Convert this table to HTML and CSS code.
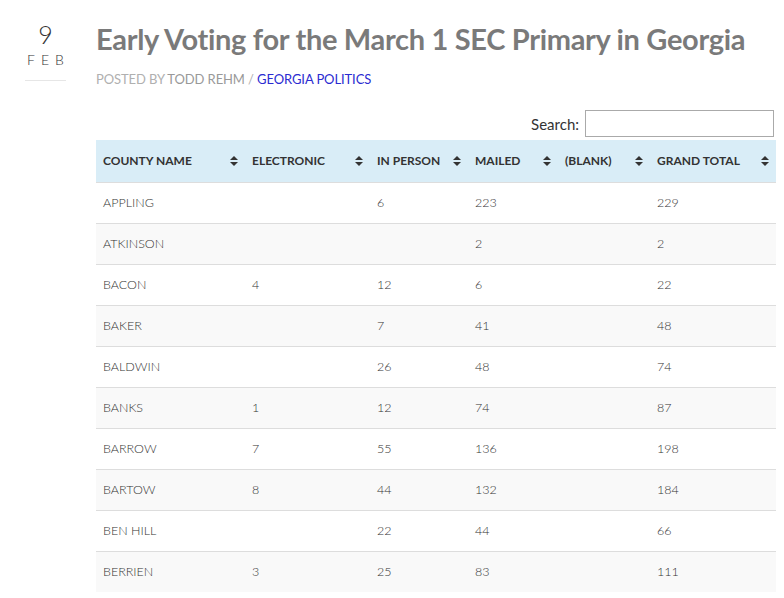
FILE: index.html
```html
<!DOCTYPE html>
<html>
<head>
<meta charset="utf-8">
<link rel="stylesheet" href="styles.css">
</head>
<body>
<div class="page">
  <div class="date">
    <div class="day">9</div>
    <div class="month">FEB</div>
  </div>
  <div class="post">
    <h1 class="title">Early Voting for the March 1 SEC Primary in Georgia</h1>
    <div class="meta"><span class="by">POSTED BY</span> <span class="author">TODD REHM</span> <span class="sep">/</span> <a class="cat" href="#">GEORGIA POLITICS</a></div>
    <div class="search"><label>Search:</label><input type="text"></div>
    <table class="data">
      <colgroup>
        <col class="c1"><col class="c2"><col class="c3"><col class="c4"><col class="c5"><col class="c6">
      </colgroup>
      <thead>
        <tr>
          <th><span>COUNTY NAME</span><i class="sort"></i></th>
          <th><span>ELECTRONIC</span><i class="sort"></i></th>
          <th><span>IN PERSON</span><i class="sort"></i></th>
          <th><span>MAILED</span><i class="sort"></i></th>
          <th><span>(BLANK)</span><i class="sort"></i></th>
          <th><span>GRAND TOTAL</span><i class="sort"></i></th>
        </tr>
      </thead>
      <tbody>
        <tr><td>APPLING</td><td></td><td>6</td><td>223</td><td></td><td>229</td></tr>
        <tr><td>ATKINSON</td><td></td><td></td><td>2</td><td></td><td>2</td></tr>
        <tr><td>BACON</td><td>4</td><td>12</td><td>6</td><td></td><td>22</td></tr>
        <tr><td>BAKER</td><td></td><td>7</td><td>41</td><td></td><td>48</td></tr>
        <tr><td>BALDWIN</td><td></td><td>26</td><td>48</td><td></td><td>74</td></tr>
        <tr><td>BANKS</td><td>1</td><td>12</td><td>74</td><td></td><td>87</td></tr>
        <tr><td>BARROW</td><td>7</td><td>55</td><td>136</td><td></td><td>198</td></tr>
        <tr><td>BARTOW</td><td>8</td><td>44</td><td>132</td><td></td><td>184</td></tr>
        <tr><td>BEN HILL</td><td></td><td>22</td><td>44</td><td></td><td>66</td></tr>
        <tr><td>BERRIEN</td><td>3</td><td>25</td><td>83</td><td></td><td>111</td></tr>
      </tbody>
    </table>
  </div>
</div>
</body>
</html>
```
FILE: styles.css
```css
html, body {
  margin: 0;
  padding: 0;
  background: #fff;
  font-family: Lato, "Open Sans", sans-serif;
}
.page {
  display: flex;
  align-items: flex-start;
}
.date {
  width: 41px;
  margin-left: 25px;
  margin-top: 20px;
  margin-right: 30px;
  text-align: center;
  color: #333;
  font-weight: 300;
  padding-bottom: 12px;
  border-bottom: 1px solid #e6e6e6;
}
.day {
  font-size: 25px;
  line-height: 28px;
  color: #333;
}
.month {
  margin-top: 4px;
  font-size: 14px;
  line-height: 16px;
  letter-spacing: 6px;
  margin-right: -6px;
  color: #333;
}
.post {
  width: 680px;
}
.title {
  margin: 0;
  padding-top: 22px;
  font-size: 29px;
  line-height: 34px;
  font-weight: 700;
  color: #7a7a7a;
  letter-spacing: -0.32px;
  white-space: nowrap;
}
.meta {
  margin-top: 16px;
  font-size: 13px;
  line-height: 14px;
  letter-spacing: -0.1px;
  color: #b0b0b0;
}
.meta .author {
  color: #999;
}
.meta .cat {
  color: #2b2bd1;
  text-decoration: none;
}
.search {
  display: flex;
  justify-content: flex-end;
  align-items: center;
  gap: 6px;
  margin-top: 24px;
  margin-right: 2px;
  font-size: 15px;
  color: #333;
}
.search input {
  width: 185px;
  height: 23px;
  box-sizing: content-box;
  border: 1px solid #aaa;
  padding: 1px;
  margin: 0;
}
.data {
  margin-top: 3px;
  width: 680px;
  border-collapse: collapse;
  table-layout: fixed;
  font-size: 12.5px;
  font-weight: 300;
  color: #333;
}
.c1 { width: 149px; }
.c2 { width: 125px; }
.c3 { width: 98px; }
.c4 { width: 90px; }
.c5 { width: 92px; }
.c6 { width: 126px; }
.data th {
  position: relative;
  background: #d9edf7;
  color: #333;
  font-size: 12px;
  font-weight: 700;
  text-align: left;
  height: 42px;
  padding: 0 8px 0 7px;
  box-sizing: border-box;
  white-space: nowrap;
}
.sort {
  position: absolute;
  right: 7px;
  top: 16px;
  width: 0;
  height: 0;
}
.sort::before, .sort::after {
  content: "";
  position: absolute;
  left: -8px;
  border-left: 4px solid transparent;
  border-right: 4px solid transparent;
}
.sort::before {
  top: 0;
  border-bottom: 4px solid #333;
}
.sort::after {
  top: 6px;
  border-top: 4px solid #333;
}
.data td {
  height: 41px;
  padding: 0 7px;
  box-sizing: border-box;
  border-top: 1px solid #ddd;
}
.data tbody tr:nth-child(even) td {
  background: #f9f9f9;
}
```
